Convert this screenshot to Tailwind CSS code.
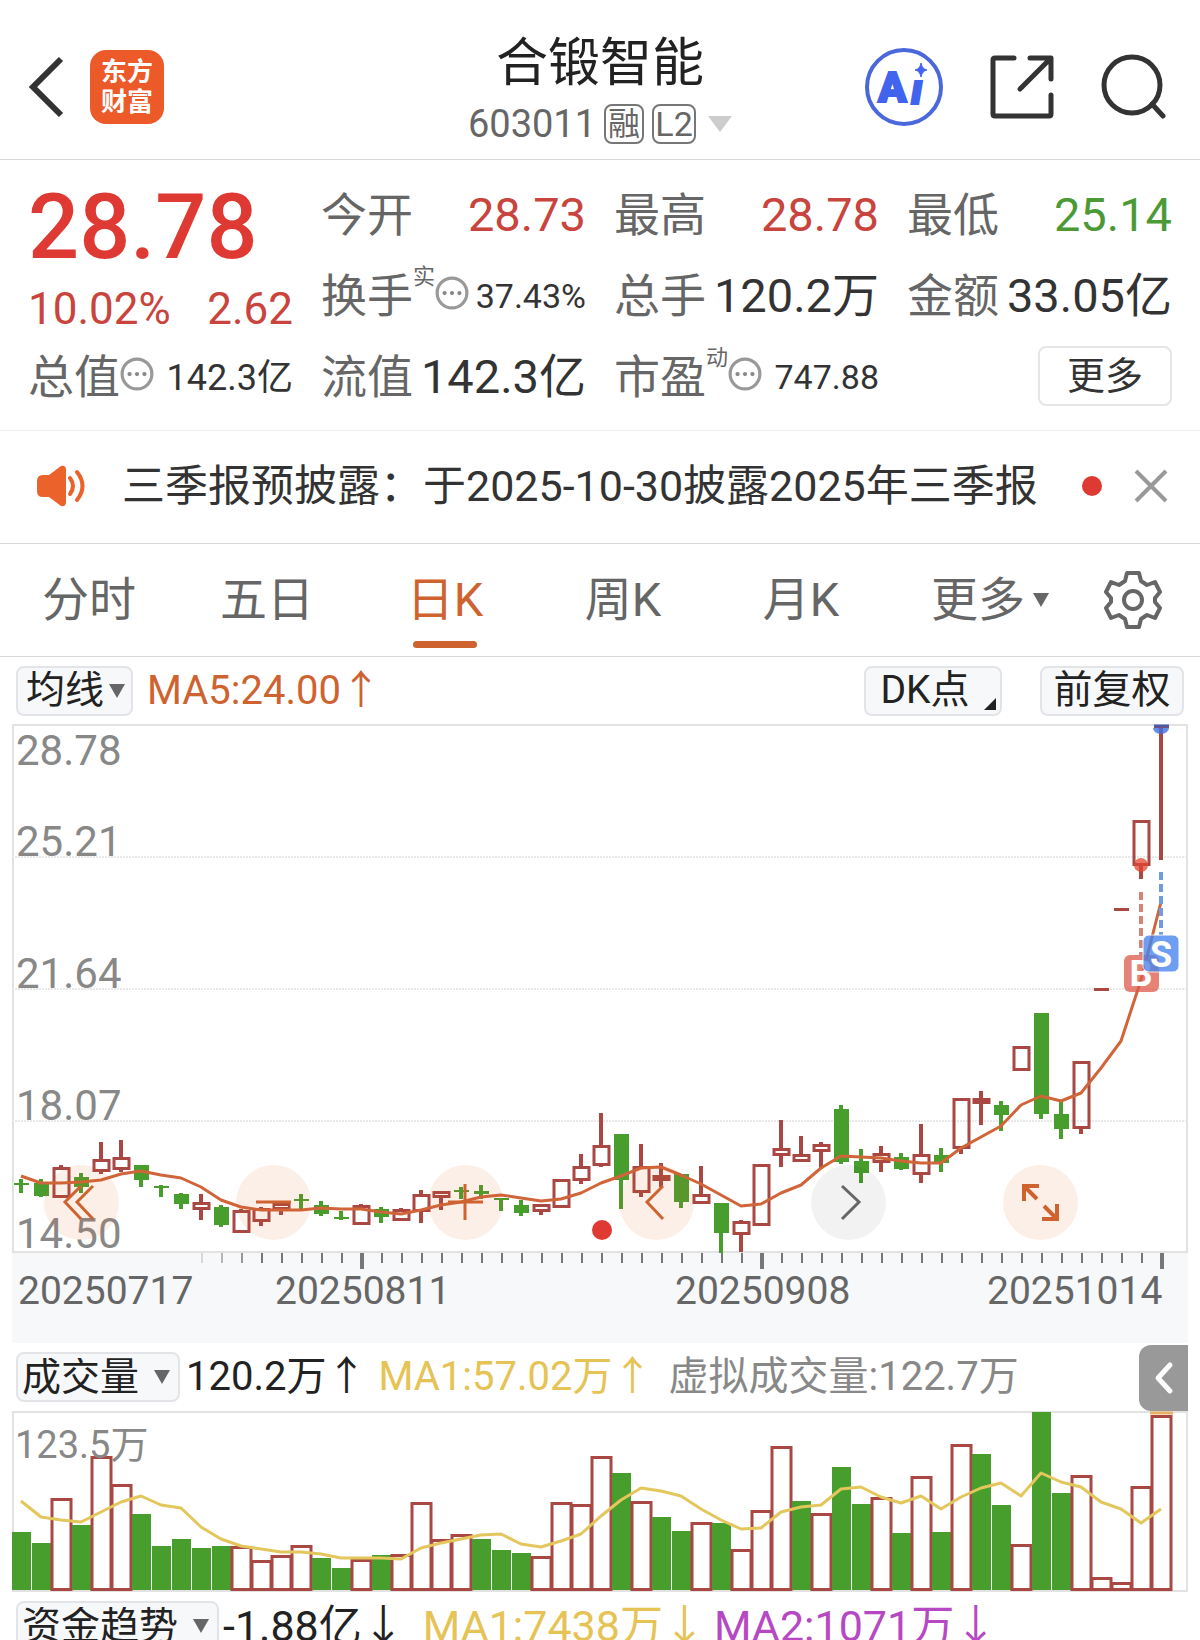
<!DOCTYPE html>
<html lang="zh-CN">
<head>
  <meta charset="UTF-8" />
  <meta name="viewport" content="width=device-width, initial-scale=1.0"/>
  <title>合锻智能 603011</title>
  <script src="https://cdn.jsdelivr.net/npm/@tailwindcss/browser@4"></script>
</head>
<body class="bg-white font-['Roboto','Noto_Sans_CJK_SC',sans-serif] text-[#333]">
  <div class="h-screen overflow-hidden">

    <!-- Header -->
    <header class="grid grid-cols-[1fr_auto_1fr] pt-[30px] pb-[5px] border-b border-[#d8d8d8]">
      <div class="h-[114px] flex items-center gap-6 pl-7">
        <a href="#" aria-label="返回">
          <svg class="w-[38px] h-[64px]" viewBox="0 0 38 64" fill="none" stroke="#333" stroke-width="6"><path d="M33 4 L5 32 L33 60"/></svg>
        </a>
        <a href="#" class="w-[74px] h-[74px] rounded-2xl bg-[#ec5a29] text-white font-bold text-[26px] leading-[30px] flex flex-col items-center justify-center">
          <span>东方</span><span>财富</span>
        </a>
      </div>
      <div class="flex flex-col items-center">
        <h1 class="pt-1 text-[52px] leading-[60px] text-[#222]">合锻智能</h1>
        <div class="h-[60px] flex items-center gap-2 text-[#666]">
          <span class="text-[38px]">603011</span>
          <span class="w-10 h-10 border-2 border-[#777] rounded-lg flex items-center justify-center text-[32px] leading-none">融</span>
          <span class="w-11 h-10 border-2 border-[#777] rounded-lg flex items-center justify-center text-[34px] leading-none">L2</span>
          <svg class="w-6 h-4 ml-1" viewBox="0 0 24 16"><path d="M0 0H24L12 16Z" fill="#ccc"/></svg>
        </div>
      </div>
      <div class="h-[114px] flex items-center justify-end gap-[46px] pr-[34px]">
        <button aria-label="Ai">
          <svg class="w-20 h-20" viewBox="0 0 80 80">
            <circle cx="40" cy="40" r="37" fill="none" stroke="#4a67dc" stroke-width="4"/>
            <text x="14" y="55" font-size="42" font-weight="900" fill="#4263ee" stroke="#4263ee" stroke-width="2">A</text>
            <text x="47" y="57" font-size="42" font-weight="900" font-style="italic" fill="#4263ee" stroke="#4263ee" stroke-width="2">ı</text>
            <path d="M57 16Q58 22 63 23Q58 24 57 30Q56 24 51 23Q56 22 57 16Z" fill="#4263ee" stroke="#4263ee"/>
          </svg>
        </button>
        <button aria-label="分享">
          <svg class="w-[64px] h-[64px]" viewBox="0 0 64 64" fill="none" stroke="#333" stroke-width="5" stroke-linecap="round" stroke-linejoin="round">
            <path d="M24 3H5Q3 3 3 5V59Q3 61 5 61H59Q61 61 61 59V40"/>
            <path d="M40 3H61V24M60 4L30 34"/>
          </svg>
        </button>
        <button aria-label="搜索">
          <svg class="w-[66px] h-[66px]" viewBox="0 0 66 66" fill="none" stroke="#333" stroke-width="5" stroke-linecap="round">
            <circle cx="32" cy="31" r="28"/><path d="M52 50L63 62"/>
          </svg>
        </button>
      </div>
    </header>

    <!-- Quote -->
    <section class="grid grid-cols-4 auto-rows-[81px] gap-x-7 px-7 pt-[15px] pb-3 border-b border-[#ededed] text-[47px]">
      <div class="row-span-2 pt-[2px] text-[#de3a33]">
        <p class="text-[90px] leading-[102px] font-medium">28.78</p>
        <p class="flex justify-between text-[44px] leading-[60px] text-[#c8443d]"><span>10.02%</span><span>2.62</span></p>
      </div>
      <div class="flex items-center justify-between"><span class="text-[46px] text-[#666]">今开</span><span class="text-[#c8443d]">28.73</span></div>
      <div class="flex items-center justify-between"><span class="text-[46px] text-[#666]">最高</span><span class="text-[#c8443d]">28.78</span></div>
      <div class="flex items-center justify-between"><span class="text-[46px] text-[#666]">最低</span><span class="text-[#4b9a35]">25.14</span></div>

      <div class="flex items-center">
        <span class="text-[46px] text-[#666]">换手</span>
        <span class="self-start pt-1 text-[22px] text-[#666]">实</span>
        <svg class="w-[34px] h-[34px] mb-2" viewBox="0 0 32 32"><use href="#info"/></svg>
        <span class="ml-auto text-[34px]">37.43%</span>
      </div>
      <div class="flex items-center justify-between whitespace-nowrap"><span class="text-[46px] text-[#666]">总手</span><span>120.2万</span></div>
      <div class="flex items-center justify-between whitespace-nowrap"><span class="text-[46px] text-[#666]">金额</span><span>33.05亿</span></div>

      <div class="flex items-center">
        <span class="text-[46px] text-[#666]">总值</span>
        <svg class="w-[34px] h-[34px] mb-2" viewBox="0 0 32 32"><use href="#info"/></svg>
        <span class="ml-auto text-[36px]">142.3亿</span>
      </div>
      <div class="flex items-center justify-between whitespace-nowrap"><span class="text-[46px] text-[#666]">流值</span><span>142.3亿</span></div>
      <div class="flex items-center">
        <span class="text-[46px] text-[#666]">市盈</span>
        <span class="self-start pt-1 text-[22px] text-[#666]">动</span>
        <svg class="w-[34px] h-[34px] mb-2" viewBox="0 0 32 32"><use href="#info"/></svg>
        <span class="ml-auto text-[34px]">747.88</span>
      </div>
      <div class="flex items-center justify-end pb-1">
        <button class="w-[134px] h-[60px] border-2 border-[#e6e6e6] rounded-lg text-[38px] leading-none">更多</button>
      </div>
    </section>

    <!-- Notice -->
    <section class="h-[113px] flex items-center pl-9 pr-8 pb-[2px] border-b border-[#d8d8d8]">
      <svg class="w-[50px] h-[42px]" viewBox="0 0 50 42">
        <path d="M7 10H13L25 1Q30 0 30 5V37Q30 42 25 41L13 32H7Q1 32 1 26V16Q1 10 7 10Z" fill="#ec622b"/>
        <path d="M34 13Q40 21 34 29M41 7Q52 21 41 35" fill="none" stroke="#ec622b" stroke-width="4" stroke-linecap="round"/>
      </svg>
      <p class="ml-9 text-[43px] whitespace-nowrap">三季报预披露：于2025-10-30披露2025年三季报</p>
      <span class="ml-auto w-5 h-5 rounded-full bg-[#de3a33]"></span>
      <button class="ml-8" aria-label="关闭">
        <svg class="w-[34px] h-[34px]" viewBox="0 0 34 34" stroke="#999" stroke-width="4"><path d="M2 2L32 32M32 2L2 32"/></svg>
      </button>
    </section>

    <!-- Period tabs -->
    <nav class="h-[113px] grid grid-cols-[178fr_178fr_178fr_178fr_178fr_200fr_110fr] border-b border-[#d8d8d8] text-[47px] text-[#666]">
      <button>分时</button>
      <button>五日</button>
      <button class="relative text-[#cf632f]">日K<span class="absolute bottom-2 left-1/2 -translate-x-1/2 w-16 h-[7px] rounded-full bg-[#cf632f]"></span></button>
      <button>周K</button>
      <button>月K</button>
      <button class="flex items-center justify-center gap-2">更多
        <svg class="w-4 h-[14px]" viewBox="0 0 16 14"><path d="M0 0H16L8 14Z" fill="#666"/></svg>
      </button>
      <button class="flex items-center justify-center pr-6" aria-label="设置">
        <svg class="w-[58px] h-[58px]" viewBox="0 0 58 58" fill="none" stroke="#666" stroke-width="4" stroke-linejoin="round">
          <path d="M23 2H35L37 10L43 14L51 11L56 21L51 27V31L56 37L51 47L43 44L37 48L35 56H23L21 48L15 44L7 47L2 37L7 31V27L2 21L7 11L15 14L21 10Z"/>
          <circle cx="29" cy="29" r="9"/>
        </svg>
      </button>
    </nav>

    <!-- Indicator bar -->
    <div class="h-[67px] flex items-center pl-4 pr-4 text-[40px] text-[#222]">
      <label class="relative">
        <select aria-label="均线" class="appearance-none block w-[117px] h-[50px] pl-2 rounded-lg border-2 border-[#e2e4e8] bg-[#f7f8fa] text-[39px] leading-none"><option>均线</option></select>
        <svg class="absolute right-2 top-[18px] w-4 h-[14px] pointer-events-none" viewBox="0 0 16 14"><path d="M0 0H16L8 14Z" fill="#666"/></svg>
      </label>
      <span class="ml-[14px] text-[#cf632f]">MA5:24.00↑</span>
      <button class="relative ml-auto w-[138px] h-[50px] pr-4 rounded-lg border-2 border-[#e2e4e8] bg-[#f7f8fa] text-[39px] leading-none">DK点
        <svg class="absolute right-1 bottom-1 w-3 h-3" viewBox="0 0 12 12"><path d="M12 0V12H0Z" fill="#222"/></svg>
      </button>
      <button class="ml-[38px] w-[144px] h-[50px] rounded-lg border-2 border-[#e2e4e8] bg-[#f7f8fa] text-[39px] leading-none">前复权</button>
    </div>

    <!-- Candlestick chart -->
    <div class="relative mx-3">
      <svg id="kline" class="block w-full" viewBox="12 724 1176 619"></svg>
      <div class="absolute left-[32px] right-[110px] bottom-[103px] flex justify-between">
        <button class="w-[75px] h-[75px] rounded-full bg-[#e06020]/10" aria-label="最左">
          <svg viewBox="0 0 75 75" fill="none" stroke="#cf632f" stroke-width="3"><path d="M37 21L21 37L37 54M49 21L33 37L49 54"/></svg>
        </button>
        <button class="w-[75px] h-[75px] rounded-full bg-[#e06020]/10" aria-label="缩小">
          <svg viewBox="0 0 75 75" fill="none" stroke="#cf632f" stroke-width="3"><path d="M20 37H55"/></svg>
        </button>
        <button class="w-[75px] h-[75px] rounded-full bg-[#e06020]/10" aria-label="放大">
          <svg viewBox="0 0 75 75" fill="none" stroke="#cf632f" stroke-width="3"><path d="M20 37H55M37 19V55"/></svg>
        </button>
        <button class="w-[75px] h-[75px] rounded-full bg-[#e06020]/10" aria-label="向左">
          <svg viewBox="0 0 75 75" fill="none" stroke="#cf632f" stroke-width="3"><path d="M44 21L28 37L44 54"/></svg>
        </button>
        <button class="w-[75px] h-[75px] rounded-full bg-black/5" aria-label="向右">
          <svg viewBox="0 0 75 75" fill="none" stroke="#666" stroke-width="3"><path d="M31 21L48 37L31 54"/></svg>
        </button>
        <button class="w-[75px] h-[75px] rounded-full bg-[#e06020]/10" aria-label="全屏">
          <svg viewBox="0 0 75 75" fill="none" stroke="#cf632f" stroke-width="4"><path d="M36 21H21V36M21 21L34 34M41 41L54 54M39 54H54V39"/></svg>
        </button>
      </div>
    </div>

    <!-- Volume bar -->
    <div class="relative h-[68px] flex items-center pl-4 text-[40px] text-[#222] whitespace-nowrap">
      <label class="relative">
        <select aria-label="副图一" class="appearance-none block w-[164px] h-[50px] pl-1 rounded-lg border-2 border-[#e2e4e8] bg-[#f7f8fa] text-[39px] leading-none"><option>成交量</option></select>
        <svg class="absolute right-[10px] top-[18px] w-4 h-[14px] pointer-events-none" viewBox="0 0 16 14"><path d="M0 0H16L8 14Z" fill="#666"/></svg>
      </label>
      <span class="ml-[6px]">120.2万↑</span>
      <span class="ml-3 text-[#e5c354]">MA1:57.02万↑</span>
      <span class="ml-4 text-[#888]">虚拟成交量:122.7万</span>
      <button class="absolute right-3 top-[2px] w-[49px] h-[66px] rounded-l-xl bg-[#999]" aria-label="展开">
        <svg class="w-full h-full" viewBox="0 0 49 66" fill="none" stroke="#fff" stroke-width="5" stroke-linecap="round" stroke-linejoin="round"><path d="M31 20L19 33L31 46"/></svg>
      </button>
    </div>

    <!-- Volume chart -->
    <div class="mx-3">
      <svg id="volume" class="block w-full" viewBox="12 1411 1176 181"></svg>
    </div>

    <!-- Capital trend bar -->
    <div class="flex items-center pt-[9px] pl-4 text-[43px] leading-[50px] text-[#222] whitespace-nowrap">
      <label class="relative">
        <select aria-label="副图二" class="appearance-none block w-[203px] h-[50px] pl-1 rounded-lg border-2 border-[#e2e4e8] bg-[#f7f8fa] text-[39px] leading-none"><option>资金趋势</option></select>
        <svg class="absolute right-[10px] top-[18px] w-4 h-[14px] pointer-events-none" viewBox="0 0 16 14"><path d="M0 0H16L8 14Z" fill="#666"/></svg>
      </label>
      <span class="ml-1">-1.88亿↓</span>
      <span class="ml-[18px] text-[#e5c354]">MA1:7438万↓</span>
      <span class="ml-2 text-[#b748c4]">MA2:1071万↓</span>
    </div>
  </div>

  <svg class="hidden">
    <symbol id="info" viewBox="0 0 32 32">
      <circle cx="16" cy="16" r="14" fill="none" stroke="#999" stroke-width="3"/>
      <circle cx="9" cy="16" r="2" fill="#888"/><circle cx="16" cy="16" r="2" fill="#888"/><circle cx="23" cy="16" r="2" fill="#888"/>
    </symbol>
  </svg>

  <script>
    const RED = '#a94742';
    const GREEN = '#489e2d';
    const x = i => 21 + i * 20;

    // 涨跌, 最高, 实体上沿, 实体下沿, 最低
    const candles = [
      ['g',1179,1183,1185,1193],['g',1179,1183,1196,1197],['r',1165,1167,1198,1198],['g',1173,1177,1187,1193],
      ['r',1142,1159,1172,1174],['r',1140,1157,1170,1172],['g',1165,1165,1180,1187],['g',1185,1186,1188,1197],
      ['g',1193,1194,1204,1209],['r',1194,1202,1210,1220],['g',1205,1207,1225,1227],['r',1209,1210,1233,1233],
      ['r',1207,1208,1222,1226],['r',1203,1203,1210,1215],['g',1194,1199,1201,1209],['g',1201,1205,1214,1216],
      ['g',1211,1217,1219,1220],['r',1204,1205,1225,1225],['g',1207,1209,1217,1223],['r',1208,1209,1221,1221],
      ['r',1190,1194,1212,1223],['r',1191,1191,1198,1210],['g',1187,1190,1192,1199],['g',1185,1191,1194,1199],
      ['g',1198,1198,1200,1211],['g',1200,1205,1213,1216],['r',1204,1204,1212,1215],['r',1179,1179,1208,1208],
      ['r',1154,1166,1181,1184],['r',1113,1145,1166,1167],['g',1134,1134,1180,1209],['r',1144,1166,1193,1197],
      ['r',1163,1175,1181,1187],['g',1174,1174,1202,1208],['r',1166,1194,1204,1204],['g',1203,1203,1233,1253],
      ['r',1220,1221,1235,1252],['r',1164,1164,1226,1226],['r',1120,1148,1156,1167],['r',1136,1154,1162,1162],
      ['r',1142,1144,1152,1169],['g',1105,1109,1162,1164],['g',1149,1161,1173,1183],['r',1146,1153,1163,1172],
      ['g',1153,1157,1169,1170],['r',1124,1154,1175,1183],['g',1148,1155,1163,1172],['r',1098,1098,1149,1154],
      ['r',1091,1098,1104,1125],['g',1101,1105,1115,1131],['r',1046,1046,1071,1071],['g',1013,1013,1114,1119],
      ['g',1102,1114,1129,1139],['r',1061,1061,1129,1134],['r',988,988,991,991],['r',908,908,911,911],
      ['r',820,820,866,879],['r',725,725,728,860]
    ];
    const ma5 = [1176,1183,1183,1182,1180,1174,1171,1175,1178,1187,1200,1207,1210,1210,1210,1208,1209,1209,1212,1214,
      1210,1205,1202,1197,1195,1198,1201,1199,1193,1183,1176,1168,1167,1175,1184,1195,1206,1204,1193,1185,
      1168,1156,1157,1158,1161,1163,1163,1148,1137,1126,1105,1096,1101,1093,1068,1041,980,902];

    const volumes = [1532,1543,1498,1525,1456,1484,1514,1546,1539,1548,1546,1546,1560,1555,1545,1558,1568,1559,1555,1554,
      1502,1539,1534,1539,1550,1553,1556,1502,1504,1456,1473,1501,1517,1531,1522,1523,1549,1510,1446,1501,
      1513,1467,1504,1497,1533,1476,1532,1444,1454,1505,1544,1412,1493,1475,1577,1582,1486,1415];
    const volumeTypes = 'ggrgrrgggggrrrrggrgrrrrgggrrrrgrggrgrrrgrggrgrgrggrggrrrrr';
    const ma1 = [1501,1517,1520,1522,1512,1502,1496,1505,1508,1527,1539,1546,1549,1552,1552,1554,1558,1558,1558,1559,
      1548,1543,1539,1535,1534,1544,1547,1541,1534,1516,1500,1488,1491,1496,1509,1520,1529,1528,1512,1507,
      1505,1489,1487,1497,1503,1496,1509,1497,1488,1483,1496,1473,1482,1487,1502,1509,1523,1509];

    const line = (data, color) =>
      `<polyline points="${data.map((y, i) => x(i) + ',' + y).join(' ')}" fill="none" stroke="${color}" stroke-width="3" stroke-linejoin="round"/>`;

    function drawKline() {
      let s = '<rect x="12" y="1252" width="1176" height="91" fill="#f7f8fa"/>';
      s += '<rect x="13" y="725" width="1174" height="527" fill="none" stroke="#e2e2e2" stroke-width="2"/>';
      [857, 989, 1121].forEach(y => {
        s += `<path d="M12 ${y}H1187" stroke="#e8e8e8" stroke-width="2" stroke-dasharray="2 1"/>`;
      });

      candles.forEach(([type, high, top, bottom, low], i) => {
        const cx = x(i);
        if (type === 'g') {
          s += `<path d="M${cx} ${high}V${low}" stroke="${GREEN}" stroke-width="4"/>`;
          s += `<rect x="${cx - 7}" y="${top}" width="15" height="${bottom - top}" fill="${GREEN}"/>`;
        } else if (bottom - top < 4) {
          s += `<rect x="${cx - 7}" y="${top}" width="15" height="${bottom - top}" fill="${RED}"/>`;
          if (low > bottom) s += `<path d="M${cx} ${top}V${low}" stroke="${RED}" stroke-width="4"/>`;
        } else {
          s += `<path d="M${cx} ${high}V${top}M${cx} ${bottom}V${low}" stroke="${RED}" stroke-width="4"/>`;
          s += `<rect x="${cx - 7}" y="${top + 1.5}" width="15" height="${bottom - top - 3}" fill="none" stroke="${RED}" stroke-width="3"/>`;
        }
      });
      s += line(ma5, '#d0653a');

      // 买卖点
      s += '<path d="M1153 728A8 6 0 0 0 1169 728Z" fill="#3f6fe0" opacity=".8"/><path d="M1154 726H1169" stroke="#4a5aa8" stroke-width="3"/>';
      s += '<circle cx="1141" cy="865" r="7" fill="#e2452f" opacity=".75"/>';
      s += '<path d="M1141 892V955" stroke="#d4857b" stroke-width="4" stroke-dasharray="8 4"/>';
      s += '<path d="M1161 872V935" stroke="#6f9be0" stroke-width="4" stroke-dasharray="8 4"/>';
      s += '<g text-anchor="middle" font-size="36" font-weight="700" fill="#fff">';
      s += '<rect x="1124" y="955" width="35" height="37" rx="6" fill="#de5a48" opacity=".75"/><text x="1141" y="986">B</text>';
      s += '<rect x="1143" y="935" width="36" height="37" rx="6" fill="#4583ee" stroke="#fff" opacity=".78"/><text x="1161" y="967">S</text></g>';
      s += '<circle cx="602" cy="1230" r="10" fill="#de3a33"/>';

      [['28.78', 765], ['25.21', 856], ['21.64', 988], ['18.07', 1120], ['14.50', 1248]].forEach(([t, y]) => {
        s += `<text x="16" y="${y}" font-size="42" fill="#888">${t}</text>`;
      });

      // 日期刻度
      for (let i = 9; i < 58; i++) {
        const major = i === 17 || i === 37 || i === 57;
        const opacity = i < 12 ? (i - 8) * 0.25 : 1;
        s += `<path d="M${x(i) + 1} 1253V${major ? 1269 : 1263}" stroke="#777" stroke-width="${major ? 4 : 2}" opacity="${opacity}"/>`;
      }
      [['20250717', 18], ['20250811', 275], ['20250908', 675], ['20251014', 987]].forEach(([t, tx]) => {
        s += `<text x="${tx}" y="1304" font-size="39" fill="#666">${t}</text>`;
      });
      document.getElementById('kline').innerHTML = s;
    }

    function drawVolume() {
      let s = '<rect x="13" y="1412" width="1174" height="179" fill="none" stroke="#e2e2e2" stroke-width="2"/>';
      volumes.forEach((y, i) => {
        if (volumeTypes[i] === 'g') {
          s += `<rect x="${x(i) - 9}" y="${y}" width="19" height="${1590 - y}" fill="${GREEN}"/>`;
        } else {
          s += `<rect x="${x(i) - 9}" y="${y + 1.5}" width="19" height="${1588 - y}" fill="none" stroke="${RED}" stroke-width="3"/>`;
        }
      });
      s += '<path d="M1150 1413H1173" stroke="#e8b065" stroke-width="3"/>';
      s += line(ma1, '#e3c65c');
      s += '<text x="15" y="1458" font-size="38" fill="#888">123.5万</text>';
      document.getElementById('volume').innerHTML = s;
    }

    drawKline();
    drawVolume();
  </script>
</body>
</html>
